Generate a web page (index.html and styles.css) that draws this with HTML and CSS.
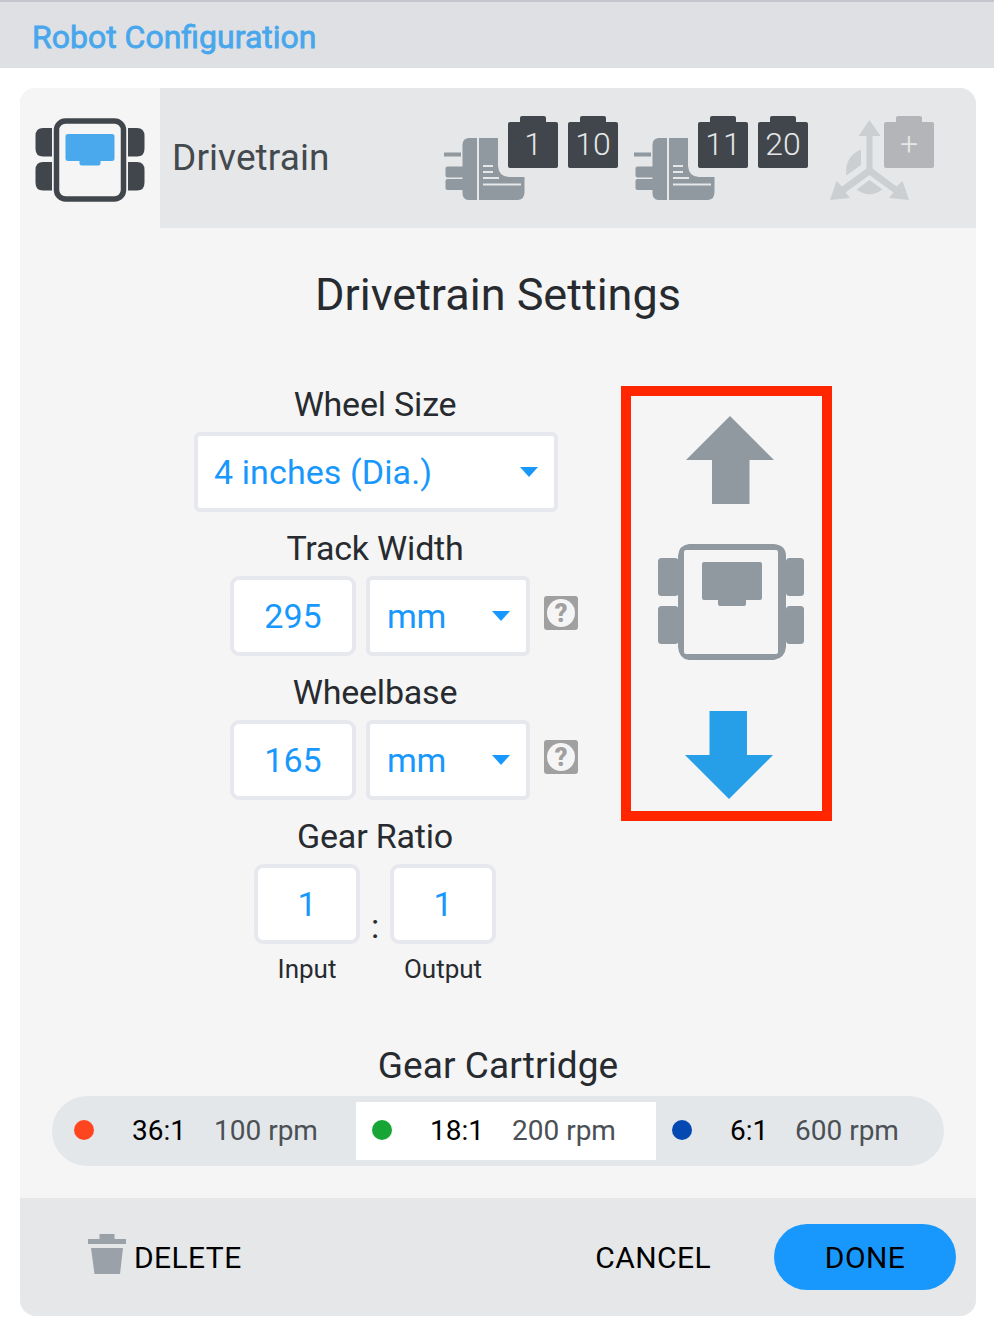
FILE: index.html
```html
<!DOCTYPE html>
<html lang="en">
<head>
    <meta charset="UTF-8">
    <meta name="viewport" content="width=device-width, initial-scale=1.0">
    <title>Robot Configuration</title>
    <link rel="stylesheet" href="styles.css">
</head>
<body>
    <header class="page-header"><h1>Robot Configuration</h1></header>

    <main class="card">
        <div class="tabs">
            <div class="tab active">
                <svg width="110" height="84" viewBox="0 0 110 84">
                    <g fill="#41464c">
                        <path d="M17 10V38.500H8Q0.500 38.500 0.500 30.500V18Q0.500 10 8 10Z"/>
                        <path d="M17 44V72.500H8Q0.500 72.500 0.500 64.500V52Q0.500 44 8 44Z"/>
                        <path d="M93 10V38.500H102Q109.500 38.500 109.500 30.500V18Q109.500 10 102 10Z"/>
                        <path d="M93 44V72.500H102Q109.500 72.500 109.500 64.500V52Q109.500 44 102 44Z"/>
                    </g>
                    <rect x="21.500" y="3" width="67" height="78" rx="9" fill="none" stroke="#41464c" stroke-width="5.500"/>
                    <path d="M33 16H77Q79.500 16 79.500 18.500V41Q79.500 43 77 43H65.500V45.500Q65.500 47.500 63.500 47.500H46.500Q44.500 47.500 44.500 45.500V43H33Q30.500 43 30.500 41V18.500Q30.500 16 33 16Z" fill="#4aa9ec"/>
                </svg>
            </div>
            <div class="tab-name">Drivetrain</div>

            <div class="device">
                <svg class="motor" width="82" height="64" viewBox="0 0 82 64">
                    <g fill="#9098a0">
                        <path d="M0 15.500H17V19.500H0Z"/>
                        <rect x="1.500" y="29.500" width="20" height="11" rx="2"/>
                        <rect x="1.500" y="42" width="20" height="11" rx="2"/>
                        <path d="M33 1V63H24.500Q18.500 62.500 18.500 56V8Q18.500 1.500 24.500 1Z"/>
                        <path d="M35 1H54V29Q55 40 65 40H80.500V55Q80.500 62.500 74 63H35Z"/>
                    </g>
                    <path d="M39 29H49M39 35H49M39 41H55M39 47.500H77" stroke="#e5e7e9" stroke-width="2"/>
                </svg>
                <span class="port">1</span>
                <span class="port">10</span>
            </div>
            <div class="device">
                <svg class="motor" width="82" height="64" viewBox="0 0 82 64">
                    <g fill="#9098a0">
                        <path d="M0 15.500H17V19.500H0Z"/>
                        <rect x="1.500" y="29.500" width="20" height="11" rx="2"/>
                        <rect x="1.500" y="42" width="20" height="11" rx="2"/>
                        <path d="M33 1V63H24.500Q18.500 62.500 18.500 56V8Q18.500 1.500 24.500 1Z"/>
                        <path d="M35 1H54V29Q55 40 65 40H80.500V55Q80.500 62.500 74 63H35Z"/>
                    </g>
                    <path d="M39 29H49M39 35H49M39 41H55M39 47.500H77" stroke="#e5e7e9" stroke-width="2"/>
                </svg>
                <span class="port">11</span>
                <span class="port">20</span>
            </div>
            <div class="device gyro">
                <svg class="axes" width="80" height="82" viewBox="0 0 80 82">
                    <g fill="#cbcfd2">
                        <path d="M39.500 1L50.500 17H42.500V49.500L66.500 67.500L72.500 62L79 81L59 79L63.500 73.500L39.500 56L15.500 73.500L20 79L0 81L6.500 62L12 67.500L36.500 49.500V17H28.500Z"/>
                        <path d="M31 30.500V46L16.500 56.500Q14 38 31 30.500Z"/>
                        <path d="M39.500 61L52.500 70.500Q39.500 80 26.500 70.500Z"/>
                    </g>
                </svg>
                <span class="port add">+</span>
            </div>
        </div>

        <section class="settings">
            <h2>Drivetrain Settings</h2>

            <div class="columns">
                <div class="fields">
                    <div class="label">Wheel Size</div>
                    <div class="row">
                        <div class="select wide">4 inches (Dia.)<i class="caret"></i></div>
                    </div>

                    <div class="label">Track Width</div>
                    <div class="row units">
                        <div class="input">295</div>
                        <div class="select">mm<i class="caret"></i></div>
                        <span class="help"><b>?</b></span>
                    </div>

                    <div class="label">Wheelbase</div>
                    <div class="row units">
                        <div class="input">165</div>
                        <div class="select">mm<i class="caret"></i></div>
                        <span class="help"><b>?</b></span>
                    </div>

                    <div class="label">Gear Ratio</div>
                    <div class="row ratio">
                        <div class="ratio-field">
                            <div class="input">1</div>
                            <small>Input</small>
                        </div>
                        <span class="colon">:</span>
                        <div class="ratio-field">
                            <div class="input">1</div>
                            <small>Output</small>
                        </div>
                    </div>
                </div>

                <div class="direction">
                    <svg class="forward" width="88" height="88" viewBox="0 0 88 88">
                        <path d="M44 0L88 44H63.500V88H26V44H0Z" fill="#9098a0"/>
                    </svg>
                    <svg class="robot" width="146" height="116" viewBox="0 0 146 116">
                        <g fill="#9098a0">
                            <rect x="0" y="14" width="20.500" height="38" rx="3.500"/>
                            <rect x="0" y="62" width="20.500" height="38" rx="3.500"/>
                            <rect x="128" y="14" width="18" height="38" rx="3.500"/>
                            <rect x="128" y="62" width="18" height="38" rx="3.500"/>
                            <path fill-rule="evenodd" d="M31 0H116Q128 1 128 12V103Q127 114 116 116H31Q21 115 20 103V12Q21 1 31 0ZM28 6Q26 6 26 8V108Q26 110 28 110H118Q120 110 120 108V8Q120 6 118 6Z"/>
                            <path d="M46 18H102Q104 18 104 20V54Q104 56 102 56H88V60Q88 62 86 62H62Q60 62 60 60V56H46Q44 56 44 54V20Q44 18 46 18Z"/>
                        </g>
                    </svg>
                    <svg class="reverse" width="88" height="88" viewBox="0 0 88 88">
                        <path d="M44 88L88 44H62V0H24.500V44H0Z" fill="#279fe8"/>
                    </svg>
                </div>
            </div>

            <h3>Gear Cartridge</h3>
            <div class="cartridges">
                <div class="cartridge red">
                    <i class="dot"></i><span class="gear">36:1</span><span class="rpm">100 rpm</span>
                </div>
                <div class="cartridge green selected">
                    <i class="dot"></i><span class="gear">18:1</span><span class="rpm">200 rpm</span>
                </div>
                <div class="cartridge blue">
                    <i class="dot"></i><span class="gear">6:1</span><span class="rpm">600 rpm</span>
                </div>
            </div>
        </section>

        <footer class="actions">
            <div class="button delete">
                <svg width="38" height="40" viewBox="0 0 38 40" fill="#9aa1a8">
                    <path d="M11.500 0H26.500V5H38V10H0V5H11.500ZM3 14H35L32 40H6.500Z"/>
                </svg>
                DELETE
            </div>
            <div class="button cancel">CANCEL</div>
            <div class="button done">DONE</div>
        </footer>
    </main>
</body>
</html>
```
FILE: styles.css
```css
* {
    box-sizing: border-box;
}
body {
    margin: 0;
    background: #fff;
    font-family: Roboto, sans-serif;
    color: #272b30;
}
svg {
    display: block;
    flex: none;
}
.page-header {
    height: 68px;
    padding-left: 32px;
    border-top: 2px solid #c5c5cd;
    background: #dfe0e4;
}
h1 {
    margin: 0;
    font-size: 32px;
    font-weight: 400;
    line-height: 70px;
    color: #48a7ec;
    -webkit-text-stroke: 0.8px #48a7ec;
}
.card {
    width: 956px;
    height: 1228px;
    margin: 20px 0 0 20px;
    border-radius: 16px;
    overflow: hidden;
    background: #f5f5f5;
}

/* tabs */
.tabs {
    display: flex;
    height: 140px;
    background: #e5e7e9;
}
.tab {
    flex: none;
    width: 140px;
    padding: 30px 15px;
    background: #f5f5f5;
}
.tab-name {
    flex: none;
    width: 284px;
    padding-left: 12px;
    font-size: 37px;
    line-height: 139px;
    letter-spacing: 0.1px;
    color: #44494e;
}
.device {
    display: flex;
    flex: none;
    width: 190px;
    padding-top: 28px;
}
.motor {
    margin: 21px -18px 0 0;
}
.port {
    position: relative;
    width: 50px;
    height: 46px;
    margin: 6px 10px 0 0;
    border-radius: 2px;
    background: #41464c;
    color: #e5e7e9;
    font-size: 32px;
    font-weight: 300;
    line-height: 44px;
    text-align: center;
}
.port::before {
    content: "";
    position: absolute;
    top: -6px;
    left: 12px;
    width: 26px;
    height: 6px;
    border-radius: 2px 2px 0 0;
    background: inherit;
}
.gyro {
    padding-left: 6px;
}
.axes {
    margin: 3px -26px 0 0;
}
.port.add {
    background: #b3b5b8;
}

/* settings */
.settings {
    height: 970px;
}
h2 {
    height: 140px;
    margin: 0;
    font-size: 45px;
    font-weight: 400;
    line-height: 134px;
    text-align: center;
}
.columns {
    display: flex;
    height: 664px;
}
.fields {
    width: 430px;
    margin-left: 140px;
    color: #1898fd;
}
.label {
    height: 64px;
    font-size: 34px;
    line-height: 72px;
    letter-spacing: -0.2px;
    text-align: center;
    color: #272b30;
}
.row {
    display: flex;
    justify-content: center;
}
.units {
    justify-content: flex-start;
    margin-left: 70px;
}
.input,
.select {
    height: 80px;
    border: 4px solid #e7e8ee;
    border-radius: 9px;
    background: #fff;
    font-size: 34px;
    line-height: 73px;
}
.input {
    width: 126px;
    text-align: center;
}
.select {
    display: flex;
    justify-content: space-between;
    width: 164px;
    margin-left: 10px;
    padding: 0 16px 0 17px;
    border-radius: 6px;
    letter-spacing: -0.2px;
}
.select.wide {
    width: 364px;
    margin-left: 2px;
    padding-left: 16px;
    letter-spacing: 0.1px;
}
.caret {
    height: 0;
    margin-top: 31px;
    border: 9px solid transparent;
    border-top: 10px solid #1898fd;
    border-bottom: 0;
}
.help {
    width: 34px;
    height: 34px;
    margin: 20px 0 0 14px;
    padding: 3px;
    border-radius: 3px;
    background: #a0a0a0;
}
.help b {
    display: block;
    height: 28px;
    border-radius: 50%;
    background: #f5f5f5;
    color: #a0a0a0;
    font-size: 25px;
    font-weight: 900;
    line-height: 29px;
    text-align: center;
}
.ratio-field {
    width: 106px;
    text-align: center;
}
.ratio-field .input {
    width: 106px;
}
.ratio-field small {
    display: block;
    font-size: 26px;
    line-height: 50px;
    color: #272b30;
}
.colon {
    width: 30px;
    padding-top: 40px;
    font-size: 34px;
    line-height: 44px;
    text-align: center;
    color: #272b30;
}

/* drive direction */
.direction {
    width: 211px;
    height: 435px;
    margin: 18px 0 0 31px;
    border: 10px solid #ff2600;
}
.forward {
    margin: 20px 0 0 55px;
}
.robot {
    margin: 40px 0 0 27px;
}
.reverse {
    margin: 51px 0 0 54px;
}

/* gear cartridge */
h3 {
    height: 64px;
    margin: 0;
    font-size: 37px;
    font-weight: 400;
    line-height: 67px;
    letter-spacing: 0.1px;
    text-align: center;
}
.cartridges {
    display: flex;
    width: 892px;
    height: 70px;
    margin-left: 32px;
    padding: 6px 0;
    border-radius: 35px;
    background: #e4e7ea;
}
.cartridge {
    display: flex;
    width: 304px;
    height: 58px;
    padding-left: 22px;
    font-size: 28px;
    line-height: 58px;
}
.cartridge.selected {
    width: 300px;
    padding-left: 16px;
    background: #fff;
}
.cartridge.blue {
    width: 288px;
    padding-left: 16px;
}
.dot {
    width: 20px;
    height: 20px;
    margin: 18px 38px 0 0;
    border-radius: 50%;
    background: #ff4420;
}
.green .dot {
    background: #17a535;
}
.blue .dot {
    background: #0449b2;
}
.gear {
    width: 82px;
    color: #000;
}
.blue .gear {
    width: 65px;
}
.rpm {
    color: #4b5055;
}

/* footer */
.actions {
    display: flex;
    height: 118px;
    padding: 26px 20px 0 68px;
    background: #e5e7e9;
}
.button {
    font-size: 30px;
    line-height: 67px;
    letter-spacing: 0.4px;
    color: #000;
}
.delete {
    display: flex;
    gap: 8px;
}
.delete svg {
    margin-top: 10px;
}
.cancel {
    margin-left: auto;
    margin-right: 63px;
}
.done {
    width: 182px;
    height: 66px;
    border-radius: 33px;
    background: #1898fd;
    text-align: center;
}
```
